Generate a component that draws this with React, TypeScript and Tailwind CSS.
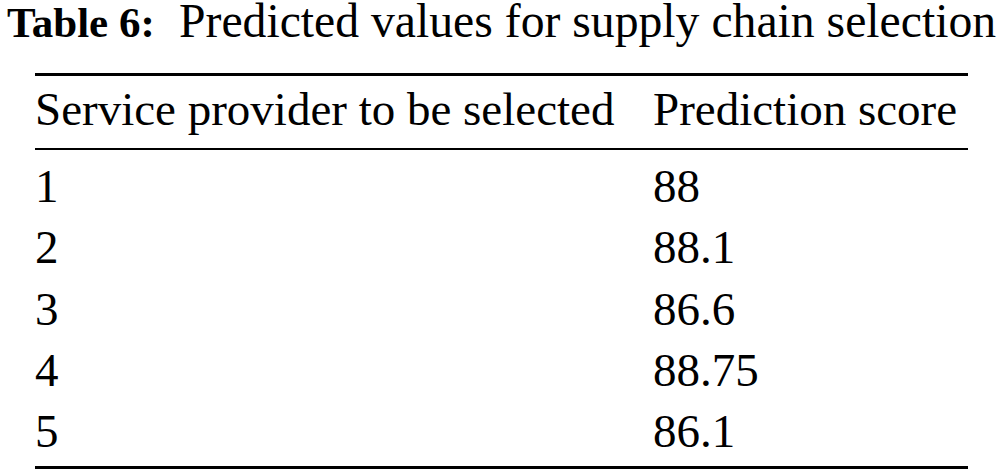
const rows = [
  { provider: '1', score: '88' },
  { provider: '2', score: '88.1' },
  { provider: '3', score: '86.6' },
  { provider: '4', score: '88.75' },
  { provider: '5', score: '86.1' },
];

export default function App() {
  return (
    <div className="w-[1004px] h-[475px] bg-white text-black overflow-hidden font-['Liberation_Serif','Times_New_Roman',serif] text-[47px]">
      {/* Caption */}
      <div className="flex items-baseline pl-[7px] h-[42px] leading-[42px] whitespace-nowrap">
        <span className="w-[172px] font-bold text-[43px]">Table 6:</span>
        <span className="text-[47.7px]">Predicted values for supply chain selection</span>
      </div>

      {/* Table */}
      <div className="ml-[35px] w-[933px] mt-[31px]">
        <div className="border-t-[3px] border-black" />
        <div className="grid grid-cols-[618px_1fr] pt-[3px] pb-[8px] leading-[61px] whitespace-nowrap">
          <div>Service provider to be selected</div>
          <div>Prediction score</div>
        </div>
        <div className="border-t-[2px] border-black" />
        <div className="pt-[6px] pb-[4px]">
          {rows.map((r) => (
            <div key={r.provider} className="grid grid-cols-[618px_1fr] leading-[61.25px]">
              <div>{r.provider}</div>
              <div>{r.score}</div>
            </div>
          ))}
        </div>
        <div className="border-t-[3px] border-black" />
      </div>
    </div>
  );
}
